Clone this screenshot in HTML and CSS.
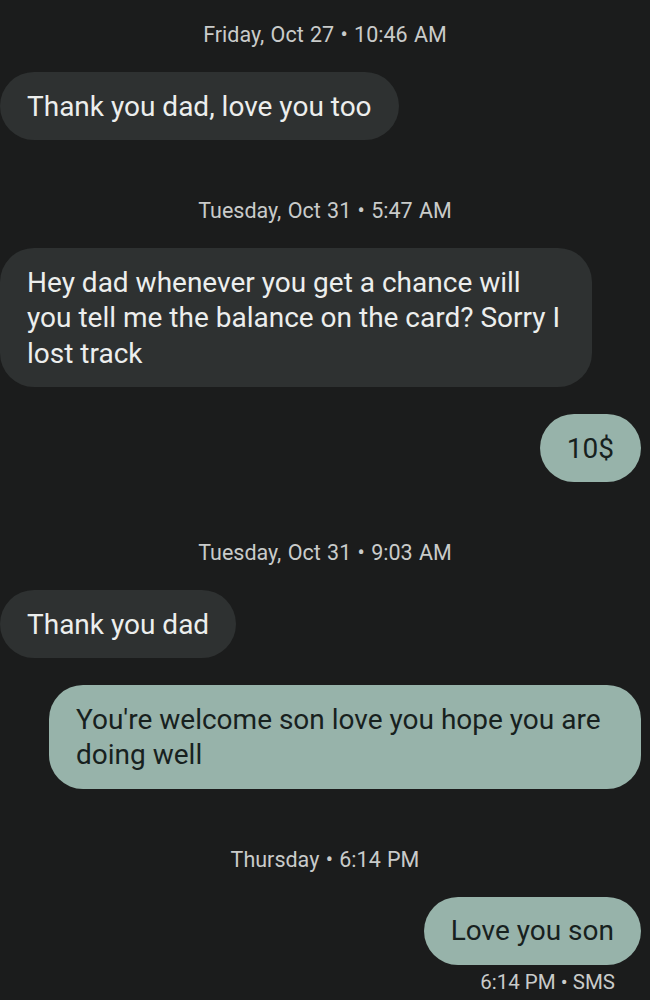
FILE: index.html
```html
<!DOCTYPE html>
<html>
<head>
<meta charset="utf-8">
<link rel="stylesheet" href="styles.css">
</head>
<body>
<main class="thread">
  <div class="stamp first">Friday, Oct 27 • 10:46 AM</div>
  <div class="msg in">Thank you dad, love you too</div>

  <div class="stamp">Tuesday, Oct 31 • 5:47 AM</div>
  <div class="msg in">Hey dad whenever you get a chance will you tell me the balance on the card? Sorry I lost track</div>
  <div class="msg out gap">10$</div>

  <div class="stamp">Tuesday, Oct 31 • 9:03 AM</div>
  <div class="msg in">Thank you dad</div>
  <div class="msg out gap">You're welcome son love you hope you are doing well</div>

  <div class="stamp">Thursday • 6:14 PM</div>
  <div class="msg out">Love you son</div>
  <div class="meta">6:14 PM • SMS</div>
</main>
</body>
</html>
```
FILE: styles.css
```css
* { box-sizing: border-box; }
html, body {
  margin: 0;
  padding: 0;
  background: #1b1c1c;
}
body {
  width: 650px;
  height: 1000px;
  overflow: hidden;
  font-family: Roboto, "Liberation Sans", sans-serif;
}
.thread {
  display: flex;
  flex-direction: column;
  align-items: flex-start;
  padding: 0 9px 0 0;
}
.stamp {
  align-self: center;
  margin: 59px 0 25px 0;
  padding-left: 9px;
  font-size: 21.5px;
  line-height: 24px;
  color: #c9cbca;
  word-spacing: 1px;
}
.stamp.first { margin-top: 23px; }
.msg {
  max-width: 592px;
  padding: 16.5px 27px 16px;
  font-size: 28px;
  line-height: 35.5px;
  border-radius: 34px;
}
.msg.in {
  background: #2e3131;
  color: #eceeed;
}
.msg.out {
  align-self: flex-end;
  background: #97b3aa;
  color: #17211e;
}
.msg.gap { margin-top: 27px; }
.meta {
  align-self: flex-end;
  margin: 7px 26px 0 0;
  font-size: 20.5px;
  line-height: 20px;
  color: #c9cbca;
}
```
